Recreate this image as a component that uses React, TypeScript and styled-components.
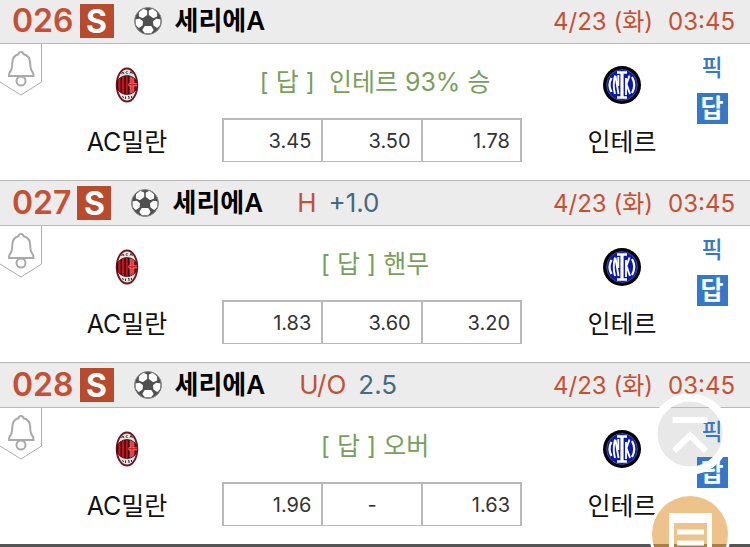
import React from 'react';
import styled, { createGlobalStyle } from 'styled-components';

const GlobalStyle = createGlobalStyle`
  *, *::before, *::after { box-sizing: border-box; }
  body {
    margin: 0;
    background: #fff;
    font-family: Inter, "Noto Sans CJK KR", sans-serif;
    overflow: hidden;
  }
  button { border: 0; padding: 0; margin: 0; font: inherit; cursor: pointer; }
`;

const List = styled.main`
  margin-top: -2px;
  border-bottom: 3px solid #555;
  background: #fff;
`;

const Match = styled.article``;

const Header = styled.header`
  display: flex;
  align-items: center;
  height: 46px;
  padding: 0 15px 0 12px;
  border-top: 1px solid #b9b9b9;
  border-bottom: 1px solid #b9b9b9;
  background: #ececec;
  white-space: nowrap;
`;

const MatchNumber = styled.span`
  color: #c55034;
  font-size: 32px;
  font-weight: 600;
  line-height: 40px;
`;

const SportBadge = styled.span`
  display: flex;
  align-items: center;
  justify-content: center;
  width: 34px;
  height: 34px;
  margin: 0 20px 0 6px;
  background: #b84a2e;
  color: #fff;
  font-size: 32px;
  font-weight: 700;
`;

const League = styled.h2`
  margin: 0 0 0 13px;
  color: #000;
  font-size: 26px;
  font-weight: 600;
  line-height: 36px;
`;

const Handicap = styled.span`
  display: flex;
  gap: 12px;
  margin-left: 34px;
  color: #46697f;
  font-size: 26px;
  line-height: 36px;
`;

const HandicapKind = styled.span`
  color: #c55034;
`;

const Kickoff = styled.time`
  display: flex;
  gap: 15px;
  margin-left: auto;
  padding-top: 2px;
  color: #c55034;
  font-size: 24px;
  line-height: 36px;
`;

const Body = styled.div`
  display: grid;
  grid-template-columns: 72px 110fr 380fr 120fr 68px;
  height: 136px;
`;

const AlarmButton = styled.button`
  align-self: start;
  justify-self: start;
  background: none;
  line-height: 0;
`;

const Team = styled.div`
  display: flex;
  flex-direction: column;
  align-items: center;
  padding-top: 22px;
  gap: 20px;
  color: #111;
  font-size: 25px;
  line-height: 36px;
  white-space: nowrap;
`;

const Center = styled.div`
  display: flex;
  flex-direction: column;
  align-items: center;
  padding-top: 20px;
  gap: 18px;
`;

const Answer = styled.p`
  margin: 0;
  padding-left: 6px;
  color: #789f5c;
  font-size: 25px;
  line-height: 36px;
  white-space: pre;
`;

const Odds = styled.table`
  width: 300px;
  height: 44px;
  border-spacing: 0;
  border: 2px solid #b9b9b9;
  border-width: 2px 2px 1px 0;
  table-layout: fixed;
`;

const Odd = styled.td<{ $empty?: boolean }>`
  padding: 1px 10px 0;
  border-left: 2px solid #b9b9b9;
  color: #333;
  font-size: 20px;
  line-height: 24px;
  text-align: ${(p) => (p.$empty ? 'center' : 'right')};
`;

const Picks = styled.div`
  display: flex;
  flex-direction: column;
  align-items: center;
  gap: 9px;
  padding: 9px 8px 0 0;
`;

const PickButton = styled.button<{ $filled?: boolean }>`
  width: 31px;
  height: 31px;
  background: ${(p) => (p.$filled ? '#3579c6' : 'transparent')};
  color: ${(p) => (p.$filled ? '#fff' : '#3579c6')};
  font-size: ${(p) => (p.$filled ? '25px' : '23px')};
  font-weight: ${(p) => (p.$filled ? 700 : 500)};
  line-height: 31px;
`;

const Floating = styled.nav`
  position: fixed;
  right: 19px;
  bottom: -28px;
  display: flex;
  flex-direction: column;
  align-items: center;
  gap: 18px;
`;

const TopDisc = styled.span`
  position: fixed;
  right: 27px;
  bottom: 80px;
  width: 66px;
  height: 66px;
  border-radius: 50%;
  background: #e8e8e8;
  mix-blend-mode: darken;
`;

const FloatButton = styled.button`
  border-radius: 50%;
  background: none;
  line-height: 0;
`;

const Bell = () => (
  <svg width="43" height="54" viewBox="0 0 43 54" fill="none" stroke="#aaa">
    <path d="M41.5 0V38L21 51L0 38" strokeWidth="1" />
    <path
      d="M21 8c-1.500 0-2.300.8-2.600 2.200C14 11.500 12.300 15 12.300 19c0 4.500-.5 7-2.300 9-.9 1-1 1.800-1 4h24.500c0-2.200-.1-3-1-4-1.800-2-2.300-4.500-2.300-9 0-4-1.700-7.500-6.600-8.800C23.300 8.800 22.500 8 21 8Z"
      strokeWidth="2"
    />
    <circle cx="21" cy="37" r="4.500" strokeWidth="2" />
  </svg>
);

const Ball = () => (
  <svg width="28" height="28" viewBox="0 0 28 28">
    <circle cx="14" cy="14" r="13.500" fill="#505050" stroke="#8a8a8a" />
    <g fill="#fff" stroke="#fff" strokeWidth="2" strokeLinejoin="round">
      <path d="M6 5.800 9.500 3 12.200 4.200 12.200 7.500 8.800 10 5.800 8.800Z" />
      <path d="M22 5.800 18.500 3 15.800 4.200 15.800 7.500 19.200 10 22.200 8.800Z" />
      <path d="M2.500 13.300 5.500 12.800 8 14.800 7.600 18 4.800 19.800 2.900 17.500Z" />
      <path d="M25.500 13.300 22.500 12.800 20 14.800 20.400 18 23.200 19.800 25.100 17.500Z" />
      <path d="M11.200 20 16.800 20 18.500 23 16.500 25.300 11.500 25.300 9.500 23Z" />
    </g>
  </svg>
);

const MilanCrest = () => (
  <svg width="24" height="38" viewBox="0 -1 24 38">
    <defs>
      <clipPath id="milan"><ellipse cx="12" cy="18" rx="10.500" ry="9.500" /></clipPath>
    </defs>
    <ellipse cx="12" cy="18" rx="10.300" ry="16.500" fill="#e4e4e4" stroke="#6d1820" strokeWidth="1.900" />
    <g clipPath="url(#milan)">
      <rect x="1" y="8" width="22" height="20" fill="#c9161f" />
      <path d="M2.500 8V28M6.300 8V28M10 8V28M13.500 8V28M20.500 8V28" stroke="#2a080b" strokeWidth="1.500" />
      <path d="M13.500 17.800H23M17 8V28" stroke="#f3a9a9" strokeWidth="2.800" />
      <path d="M13.500 17.800H23M17 8V28" stroke="#d81822" strokeWidth="1.400" />
    </g>
    <ellipse cx="12" cy="18" rx="10.500" ry="9.500" fill="none" stroke="#3a1518" strokeWidth=".8" />
    <path d="M6.500 7 8 5 9 7M12.500 4.500C10.500 4 10.500 7 12.500 6.500M15 6.500 16 4.500 17.500 7M7.500 29 8.500 31M10.500 29.500V32M13 29.500H14V32M16.500 29V31" fill="none" stroke="#333" />
  </svg>
);

const InterCrest = () => (
  <svg width="38" height="38" viewBox="0 0 38 38">
    <circle cx="19" cy="19" r="19" fill="#000" />
    <circle cx="19" cy="19" r="15.400" fill="#0a1aa6" stroke="#4a56b8" strokeWidth=".8" />
    <g fill="none" stroke="#fff">
      <path d="M14 6.500H24M14 31.500H24" strokeWidth="2.600" />
      <path d="M19 7V31" strokeWidth="3.200" />
      <path d="M12 9.500Q9.500 19 12 28M12.500 10 15.500 28M15.300 9V20" strokeWidth="1.900" />
      <path d="M23 29V12M26.500 9.500 23.500 18 27 28" strokeWidth="1.900" />
      <path d="M8.500 12Q4.500 19 8.500 26M29 11Q33.500 19 29 27" strokeWidth="2.200" />
    </g>
  </svg>
);

const TopIcon = () => (
  <svg width="82" height="82" viewBox="0 0 82 82">
    <circle cx="41" cy="41" r="36.500" fill="none" stroke="#fff" strokeWidth="8" />
    <path d="M23.500 27H58.500M25 58 41 42.500 57 58" fill="none" stroke="#fff" strokeWidth="6" />
  </svg>
);

const ListIcon = () => (
  <svg width="82" height="82" viewBox="0 0 82 82">
    <circle cx="41" cy="41" r="39.500" fill="none" stroke="#fff" strokeWidth="3" />
    <circle cx="41" cy="41" r="38" fill="#e39b3e" fillOpacity=".6" />
    <path d="M20 20H63V68H20ZM25 30V63H58V30Z" fill="#fff" fillRule="evenodd" />
    <path d="M28 39H55M28 50H55" stroke="#fff" strokeWidth="5" />
  </svg>
);

interface MatchData {
  no: string;
  kind?: string;
  line?: string;
  answer: string;
  odds: string[];
}

const matches: MatchData[] = [
  { no: '026', answer: '[ 답 ]  인테르 93% 승', odds: ['3.45', '3.50', '1.78'] },
  { no: '027', kind: 'H', line: '+1.0', answer: '[ 답 ] 핸무', odds: ['1.83', '3.60', '3.20'] },
  { no: '028', kind: 'U/O', line: '2.5', answer: '[ 답 ] 오버', odds: ['1.96', '-', '1.63'] },
];

export default function App() {
  return (
    <>
      <GlobalStyle />
      <List>
        {matches.map((m) => (
          <Match key={m.no}>
            <Header>
              <MatchNumber>{m.no}</MatchNumber>
              <SportBadge>S</SportBadge>
              <Ball />
              <League>세리에A</League>
              {m.kind && (
                <Handicap>
                  <HandicapKind>{m.kind}</HandicapKind>
                  <span>{m.line}</span>
                </Handicap>
              )}
              <Kickoff dateTime="04-23T03:45">
                <span>4/23 (화)</span>
                <span>03:45</span>
              </Kickoff>
            </Header>
            <Body>
              <AlarmButton aria-label="알림"><Bell /></AlarmButton>
              <Team><MilanCrest /><span>AC밀란</span></Team>
              <Center>
                <Answer>{m.answer}</Answer>
                <Odds>
                  <tbody>
                    <tr>
                      {m.odds.map((o, i) => <Odd key={i} $empty={o === '-'}>{o}</Odd>)}
                    </tr>
                  </tbody>
                </Odds>
              </Center>
              <Team><InterCrest /><span>인테르</span></Team>
              <Picks>
                <PickButton>픽</PickButton>
                <PickButton $filled>답</PickButton>
              </Picks>
            </Body>
          </Match>
        ))}
      </List>
      <TopDisc />
      <Floating>
        <FloatButton aria-label="맨 위로"><TopIcon /></FloatButton>
        <FloatButton aria-label="목록"><ListIcon /></FloatButton>
      </Floating>
    </>
  );
}
